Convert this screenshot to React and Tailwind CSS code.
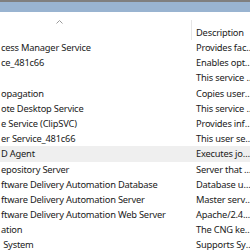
const rows = [
  ["cess Manager Service", "Provides facilities for managing UWP apps access"],
  ["ce_481c66", "Enables optional screen capture functionality"],
  ["", "This service sets time based on NITZ messages"],
  ["opagation", "Copies user certificates and root certificates"],
  ["ote Desktop Service", "This service enables incoming connections"],
  ["e Service (ClipSVC)", "Provides infrastructure support for the Microsoft Store"],
  ["er Service_481c66", "This user service is used for Clipboard scenarios"],
  ["D Agent", "Executes jobs for the CloudBees CD server"],
  ["epository Server", "Server that CloudBees CD uses to store artifacts"],
  ["ftware Delivery Automation Database", "Database used by CloudBees CD"],
  ["ftware Delivery Automation Server", "Master server for CloudBees CD"],
  ["ftware Delivery Automation Web Server", "Apache/2.4.54 (Win64) OpenSSL"],
  ["ation", "The CNG key isolation service is hosted in the LSA process"],
  [" System", "Supports System Event Notification Service (SENS)"],
]

export default function App() {
  return (
    <div className="w-[250px] h-[250px] overflow-hidden bg-white text-[#1a1a1a] font-['Noto_Sans',sans-serif] text-[9.3px] leading-[15.2px] tracking-[-0.2px]">
      <div className="h-[2px] bg-[#7f7f7f]" />
      <div className="h-[10px] bg-[#99b4d1]" />

      <div className="flex h-[28px] items-end">
        <div className="relative w-[191px] flex-none h-full">
          <svg className="absolute left-[56px] top-[8px]" width="7" height="4" viewBox="0 0 7 4">
            <path d="M0.5 3.5 L3.5 0.5 L6.5 3.5" fill="none" stroke="#9a9a9a" strokeWidth="1" />
          </svg>
        </div>
        <div className="flex-none w-[64px] h-[20px] border-l border-[#e5e5e5] pl-[4px] flex items-end">
          Description
        </div>
      </div>

      {rows.map(([name, desc], i) => (
        <div key={i} className={`flex h-[15.2px] w-[255px] ${i === 7 ? "bg-[#efefef]" : ""}`}>
          <div className="w-[191px] flex-none overflow-hidden whitespace-pre pl-[1px]">
            {name}
          </div>
          <div className="w-[63px] flex-none pl-[5px] overflow-hidden whitespace-nowrap text-ellipsis">
            {desc}
          </div>
        </div>
      ))}
    </div>
  )
}
